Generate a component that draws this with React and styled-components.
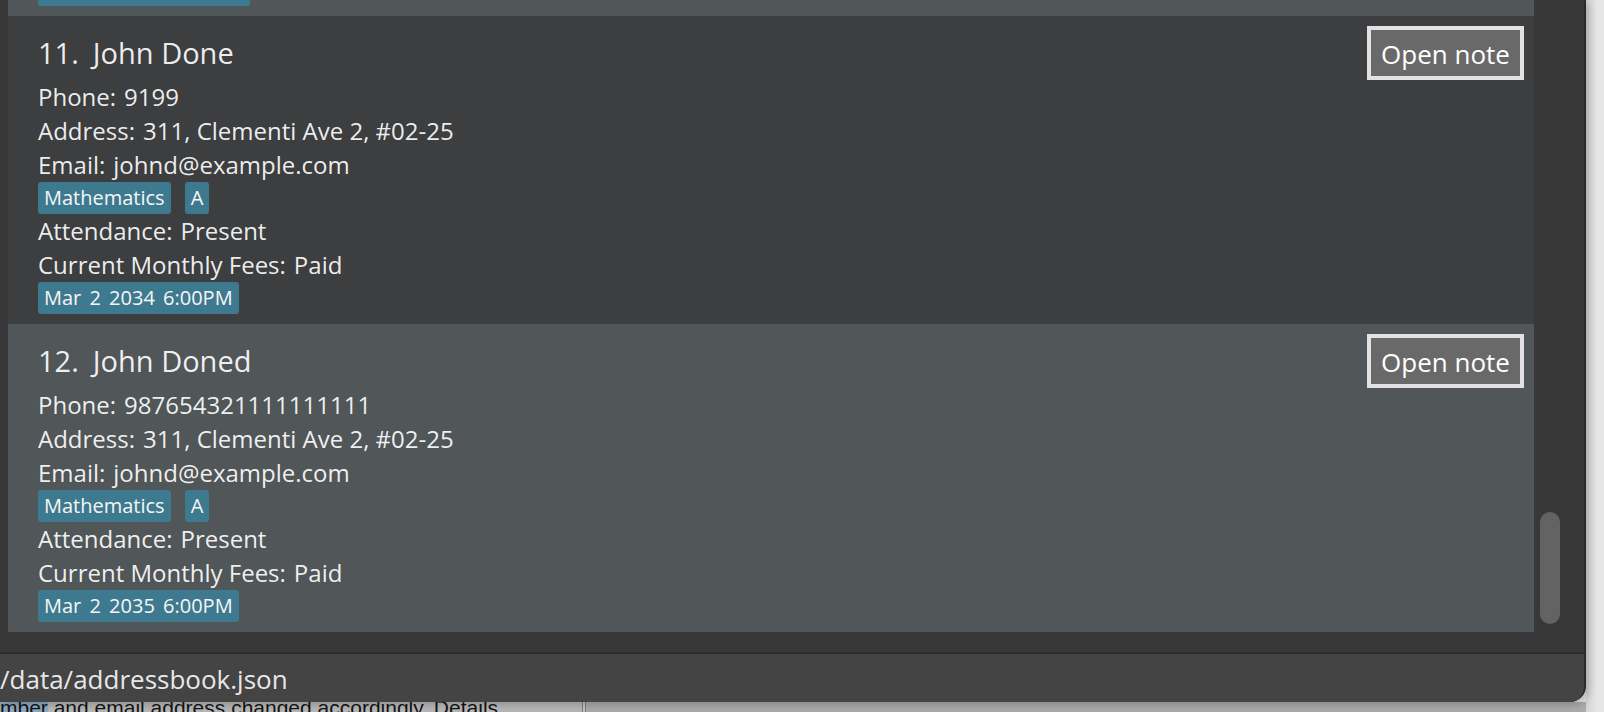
import React from 'react';
import styled, { createGlobalStyle } from 'styled-components';

const GlobalStyle = createGlobalStyle`
  html, body {
    margin: 0;
    padding: 0;
  }
  body {
    background: #e4e4e4;
    font-family: "Open Sans", "Noto Sans", sans-serif;
    overflow: hidden;
  }
  * {
    box-sizing: border-box;
  }
`;

const persons = [
	{
		id: 10,
		name: 'John Doe',
		phone: '91234567',
		address: '311, Clementi Ave 2, #02-25',
		email: 'johnd@example.com',
		tags: ['Mathematics', 'A'],
		attendance: 'Present',
		fees: 'Paid',
		lesson: 'Mar 12 2033 6:00PM',
	},
	{
		id: 11,
		name: 'John Done',
		phone: '9199',
		address: '311, Clementi Ave 2, #02-25',
		email: 'johnd@example.com',
		tags: ['Mathematics', 'A'],
		attendance: 'Present',
		fees: 'Paid',
		lesson: 'Mar 2 2034 6:00PM',
	},
	{
		id: 12,
		name: 'John Doned',
		phone: '987654321111111111',
		address: '311, Clementi Ave 2, #02-25',
		email: 'johnd@example.com',
		tags: ['Mathematics', 'A'],
		attendance: 'Present',
		fees: 'Paid',
		lesson: 'Mar 2 2035 6:00PM',
	},
];

const PersonCard = ({ person }) => (
	<Card $odd={person.id % 2 === 1}>
		{/* name + note button */}
		<CardHeader>
			<Name>
				<span>{person.id}.</span>
				<span>{person.name}</span>
			</Name>
			<OpenNote type='button'>Open note</OpenNote>
		</CardHeader>

		<Field>
			<span>Phone:</span>
			<span>{person.phone}</span>
		</Field>
		<Field>
			<span>Address:</span>
			<span>{person.address}</span>
		</Field>
		<Field>
			<span>Email:</span>
			<span>{person.email}</span>
		</Field>

		<TagRow>
			{person.tags.map((tag) => (
				<Tag key={tag}>{tag}</Tag>
			))}
		</TagRow>

		<Field>
			<span>Attendance:</span>
			<span>{person.attendance}</span>
		</Field>
		<Field>
			<span>Current Monthly Fees:</span>
			<span>{person.fees}</span>
		</Field>

		<TagRow>
			<Tag $spaced>{person.lesson}</Tag>
		</TagRow>
	</Card>
);

const App = () => {
	return (
		<>
			<GlobalStyle />
			<Desktop>
				<Window>
					<MainArea>
						{/* list is scrolled to the bottom, earlier cards clip off the top */}
						<PersonList>
							{persons.map((person) => (
								<PersonCard key={person.id} person={person} />
							))}
						</PersonList>
						<ScrollTrack>
							<ScrollThumb />
						</ScrollTrack>
					</MainArea>
					<StatusBar>/data/addressbook.json</StatusBar>
				</Window>

				<Gutter />

				{/* window behind, peeking out below */}
				<BehindStrip>
					<BehindPane>
						<BehindText>
							<Selected>mber</Selected> and email address changed accordingly. Details
						</BehindText>
					</BehindPane>
					<BehindDivider />
					<BehindPane $grow />
				</BehindStrip>
			</Desktop>
		</>
	);
};

export default App;

const Desktop = styled.div`
	display: grid;
	grid-template-columns: 1586px 1fr;
	grid-template-rows: 702px 10px;
	width: 1604px;
	height: 712px;
	overflow: hidden;
	background: #e4e4e4;
`;

const Window = styled.div`
	grid-column: 1;
	grid-row: 1;
	display: flex;
	flex-direction: column;
	background: #383838;
	border-right: 2px solid #2c2c2c;
	border-bottom-right-radius: 16px;
	overflow: hidden;
	box-shadow: 2px 2px 10px rgba(0, 0, 0, 0.25);
	position: relative;
	z-index: 1;
`;

const Gutter = styled.div`
	grid-column: 2;
	grid-row: 1 / span 2;
	background: linear-gradient(90deg, #d4d4d4 0%, #e6e6e6 60%);
`;

const MainArea = styled.div`
	flex: 1;
	min-height: 0;
	display: flex;
	padding: 0 0 20px 8px;
`;

const PersonList = styled.div`
	flex: 1;
	min-width: 0;
	display: flex;
	flex-direction: column;
	justify-content: flex-end;
	overflow: hidden;
`;

const Card = styled.div`
	flex-shrink: 0;
	display: flex;
	flex-direction: column;
	padding: 10px 10px 10px 30px;
	background: ${({ $odd }) => ($odd ? '#3c3e3f' : '#515658')};
	color: rgba(255, 255, 255, 0.92);
`;

const CardHeader = styled.div`
	display: flex;
	justify-content: space-between;
	align-items: flex-start;
`;

const Name = styled.div`
	display: flex;
	gap: 14px;
	font-size: 29px;
	line-height: 54px;
	white-space: nowrap;
`;

const OpenNote = styled.button`
	width: 157px;
	height: 54px;
	padding: 1px 0 0;
	border: 4px solid #e2e2e2;
	background: #696969;
	color: #ffffff;
	font-family: "Open Sans", "Noto Sans", sans-serif;
	font-size: 26px;
	line-height: 44px;
	cursor: pointer;
`;

const Field = styled.div`
	display: flex;
	gap: 8px;
	font-size: 24px;
	line-height: 34px;
	white-space: nowrap;
`;

const TagRow = styled.div`
	display: flex;
	gap: 14px;
`;

const Tag = styled.span`
	height: 32px;
	padding: 0 6px;
	border-radius: 3px;
	background: #3e7a8f;
	color: #f6f6f6;
	font-size: 20px;
	line-height: 32px;
	white-space: nowrap;
	word-spacing: ${({ $spaced }) => ($spaced ? '3px' : '0')};
`;

const ScrollTrack = styled.div`
	width: 50px;
	display: flex;
	flex-direction: column;
	justify-content: flex-end;
	padding: 0 0 8px 6px;
`;

const ScrollThumb = styled.div`
	width: 20px;
	height: 112px;
	border-radius: 10px;
	background: #636363;
`;

const StatusBar = styled.div`
	height: 50px;
	flex-shrink: 0;
	border-top: 2px solid #2c2c2c;
	background: #444444;
	color: rgba(255, 255, 255, 0.9);
	font-size: 26px;
	line-height: 48px;
	padding-top: 1px;
	white-space: nowrap;
`;

const BehindStrip = styled.div`
	grid-column: 1;
	grid-row: 2;
	display: flex;
	overflow: hidden;
	background: #b4b4b4;
`;

const BehindPane = styled.div`
	width: ${({ $grow }) => ($grow ? 'auto' : '582px')};
	flex: ${({ $grow }) => ($grow ? 1 : 'none')};
	overflow: hidden;
	background: ${({ $grow }) => ($grow ? '#ababab' : '#b8b8b8')};
`;

const BehindText = styled.div`
	margin-top: -4px;
	font-family: "Liberation Sans", Arial, sans-serif;
	font-size: 21px;
	line-height: 20px;
	color: #141414;
	white-space: nowrap;
`;

const Selected = styled.span`
	background: #8eaac2;
`;

const BehindDivider = styled.div`
	width: 4px;
	border-left: 1px solid #7c7c7c;
	border-right: 1px solid #7c7c7c;
	background: #c4c4c4;
`;
